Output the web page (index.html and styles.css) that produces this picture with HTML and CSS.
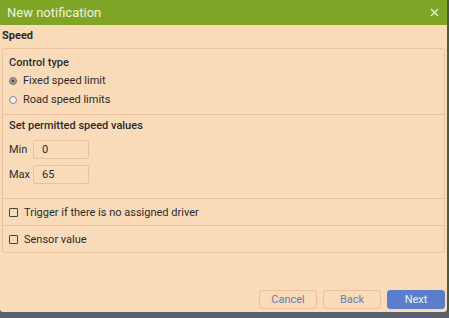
FILE: index.html
```html
<!DOCTYPE html>
<html lang="en">
<head>
    <meta charset="UTF-8">
    <title>New notification</title>
    <link rel="stylesheet" href="styles.css">
</head>
<body>
    <div class="dialog">
        <div class="dialog-header">
            <span class="dialog-title">New notification</span>
            <svg class="close" width="9" height="9" viewBox="0 0 9 9">
                <path d="M1 1 L8 8 M8 1 L1 8" stroke="#eef0d2" stroke-width="1.3" fill="none"/>
            </svg>
        </div>
        <div class="dialog-body">
            <div class="group-title">Speed</div>
            <div class="panel">
                <div class="section section-type">
                    <div class="section-title">Control type</div>
                    <label class="option"><span class="radio checked"></span>Fixed speed limit</label>
                    <label class="option"><span class="radio"></span>Road speed limits</label>
                </div>
                <div class="section section-values">
                    <div class="section-title">Set permitted speed values</div>
                    <div class="field"><span class="field-label">Min</span><span class="input">0</span></div>
                    <div class="field"><span class="field-label">Max</span><span class="input">65</span></div>
                </div>
                <div class="section section-check">
                    <label class="option"><span class="checkbox"></span>Trigger if there is no assigned driver</label>
                </div>
                <div class="section section-check">
                    <label class="option"><span class="checkbox"></span>Sensor value</label>
                </div>
            </div>
        </div>
        <div class="dialog-footer">
            <button class="btn">Cancel</button>
            <button class="btn">Back</button>
            <button class="btn btn-primary">Next</button>
        </div>
    </div>
</body>
</html>
```

FILE: styles.css
```css
body {
    margin: 0;
    padding: 0;
    width: 449px;
    height: 318px;
    overflow: hidden;
    background-color: #59606e;
    font-family: Roboto, 'Liberation Sans', sans-serif;
    font-size: 11px;
    color: #2b2b2b;
}
.dialog {
    width: 447px;
    height: 312px;
    background-color: #f9dbba;
    border-radius: 0 0 3px 3px;
    display: flex;
    flex-direction: column;
    box-shadow: 2px 0 0 #4f5a3a;
}
.dialog-header {
    height: 25px;
    background-color: #7ea526;
    display: flex;
    align-items: center;
    justify-content: space-between;
    padding: 0 8px 0 7px;
}
.dialog-title {
    color: #f1f3dc;
    font-size: 13px;
}
.close {
    display: block;
}
.dialog-body {
    padding: 0 2px;
    flex-grow: 1;
}
.group-title {
    font-weight: bold;
    height: 22px;
    line-height: 22px;
    font-size: 11px;
}
.panel {
    border: 1px solid #e8c29e;
    border-radius: 3px;
    margin-top: 1px;
}
.section {
    border-top: 1px solid #e8c29e;
    padding: 0 6px;
    box-sizing: border-box;
}
.section:first-child {
    border-top: none;
}
.section-title {
    font-weight: 500;
    height: 22px;
    line-height: 22px;
}
.section-type {
    padding-top: 6px;
    height: 65px;
}
.section-type .section-title {
    height: 16px;
    line-height: 16px;
}
.section-type .option {
    height: 19px;
}
.section-values {
    height: 84px;
}
.section-check {
    height: 27px;
}
.option {
    display: flex;
    align-items: center;
    gap: 6px;
    height: 20px;
}
.section-check .option {
    height: 26px;
}
.radio {
    width: 6px;
    height: 6px;
    border-radius: 50%;
    border: 1px solid #8a8a8a;
    background-color: #f4f4f4;
    display: flex;
    align-items: center;
    justify-content: center;
}
.radio.checked {
    background-color: #9a9a9a;
    border-color: #777;
}
.radio.checked::after {
    content: "";
    width: 2px;
    height: 2px;
    border-radius: 50%;
    background-color: #222;
}
.checkbox {
    width: 7px;
    height: 7px;
    border: 1px solid #444;
    border-radius: 1px;
}
.field {
    display: flex;
    align-items: center;
    height: 25px;
}
.field-label {
    width: 24px;
}
.input {
    width: 46px;
    height: 17px;
    line-height: 17px;
    border: 1px solid #e8c29e;
    border-radius: 2px;
    padding-left: 8px;
}
.dialog-footer {
    display: flex;
    justify-content: flex-end;
    gap: 6px;
    padding: 0 2px 3px 0;
}
.btn {
    width: 58px;
    height: 19px;
    font-family: Roboto, 'Liberation Sans', sans-serif;
    font-size: 11px;
    color: #6b7aaf;
    background-color: #f9dbba;
    border: 1px solid #e8c29e;
    border-radius: 3px;
    padding: 0;
}
.btn-primary {
    background-color: #5a7ecb;
    border-color: #5a7ecb;
    color: #eef0f6;
}
```
